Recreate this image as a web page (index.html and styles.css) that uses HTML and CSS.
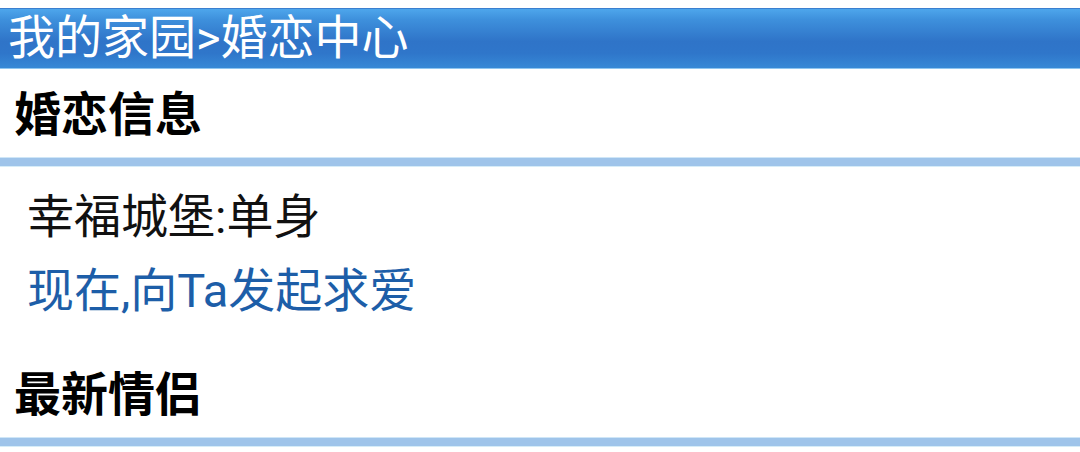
FILE: index.html
```html
<!DOCTYPE html>
<html lang="zh-CN">
<head>
<meta charset="utf-8">
<title>婚恋中心</title>
<link rel="stylesheet" href="styles.css">
</head>
<body>
<div class="topbar">我的家园&gt;婚恋中心</div>
<h2 class="sec-title">婚恋信息</h2>
<div class="sep"></div>
<div class="info">
  <div class="line">幸福城堡:单身</div>
  <div class="line"><a class="link" href="#">现在,向Ta发起求爱</a></div>
</div>
<h2 class="sec-title">最新情侣</h2>
<div class="sep"></div>
</body>
</html>
```

FILE: styles.css
```css
html, body {
  margin: 0;
  padding: 0;
  background: #ffffff;
}
body {
  padding-top: 8px;
  font-family: Roboto, "Noto Sans CJK SC", sans-serif;
  color: #111111;
}
.topbar {
  height: 59px;
  line-height: 57px;
  padding-left: 8px;
  font-size: 47px;
  color: #ffffff;
  border-top: 1px solid #3b7fcf;
  border-bottom: 1px solid #8fc6ef;
  background: linear-gradient(to bottom, #4ea6ec 0%, #3e90dc 18%, #2f74c8 55%, #2f76ca 75%, #3789d6 100%);
}
.sec-title {
  margin: 0;
  padding: 4px 0 0 14px;
  line-height: 84px;
  font-size: 47px;
  font-weight: bold;
  color: #000000;
}
.sep {
  height: 8px;
  background: #9fc4ea;
  border-top: 1px solid #cfe6f7;
  border-bottom: 1px solid #d6ecf8;
}
.info {
  padding: 13px 0 21px 27px;
}
.line {
  line-height: 74px;
  font-size: 47px;
  color: #111111;
}
.link {
  color: #1d5ea8;
  text-decoration: none;
}
```
